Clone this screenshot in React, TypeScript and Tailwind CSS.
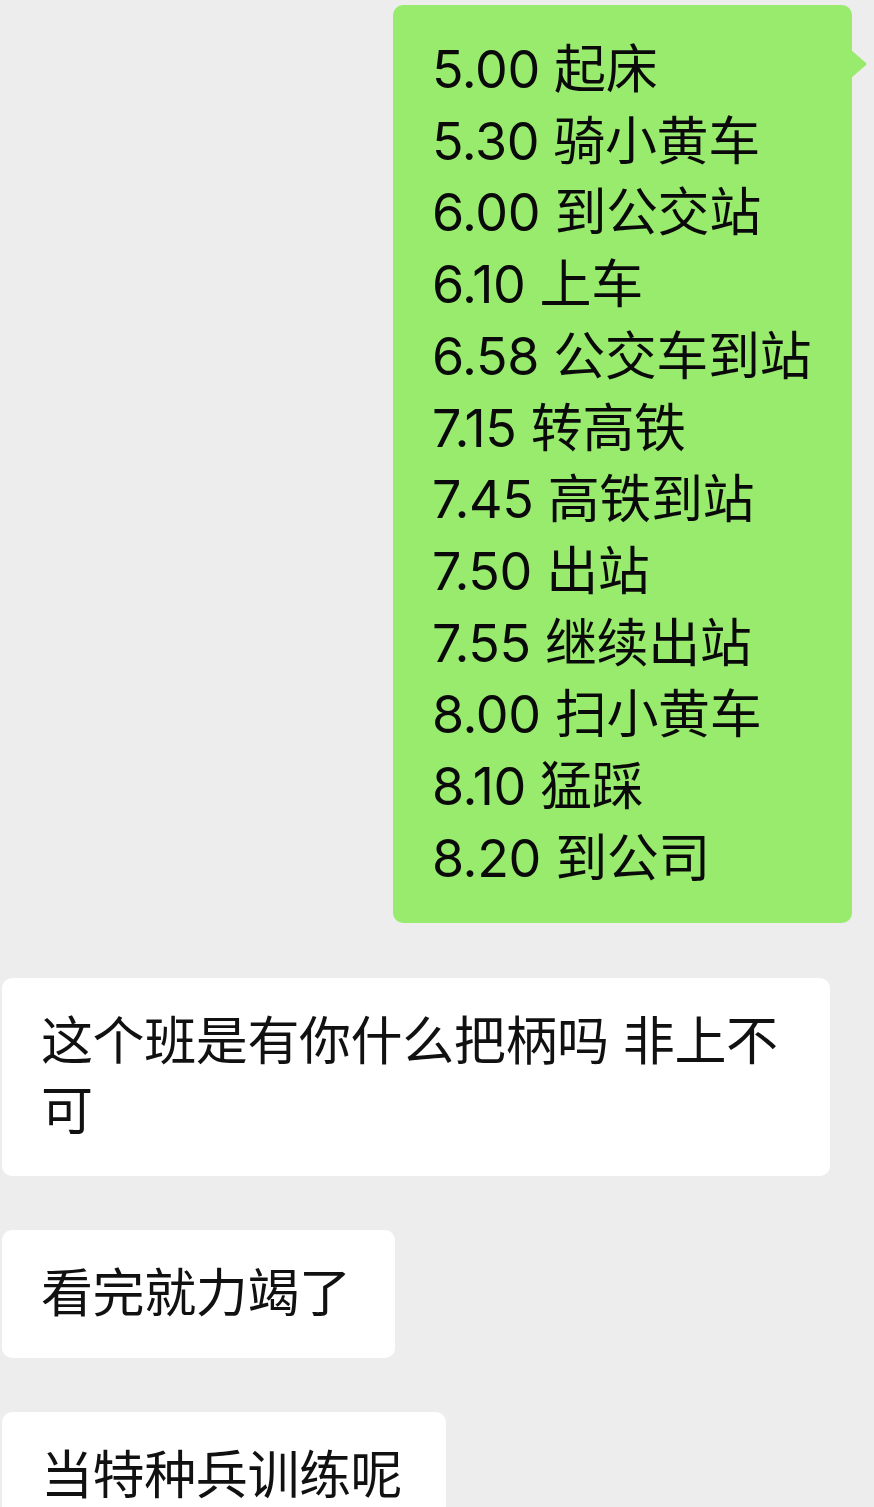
const schedule = [
  "5.00 起床",
  "5.30 骑小黄车",
  "6.00 到公交站",
  "6.10 上车",
  "6.58 公交车到站",
  "7.15 转高铁",
  "7.45 高铁到站",
  "7.50 出站",
  "7.55 继续出站",
  "8.00 扫小黄车",
  "8.10 猛踩",
  "8.20 到公司",
];

const font = "font-['Inter','Noto_Sans_CJK_SC',sans-serif]";

function LeftBubble({ children, className = "" }: { children: React.ReactNode; className?: string }) {
  return (
    <div
      className={`ml-[2px] rounded-[10px] bg-white py-[29px] pl-[39px] pr-[44px] text-[52px] leading-[70px] text-[#111] ${className}`}
    >
      {children}
    </div>
  );
}

export default function App() {
  return (
    <div className={`h-[1507px] w-full overflow-hidden bg-[#ededed] font-normal tracking-[-0.4px] ${font}`}>
      <div className="flex justify-end pt-[5px] pr-[22px]">
        <div className="relative w-[459px] rounded-[10px] bg-[#99eb6d] py-[29px] pl-[39px] text-[52px] leading-[71.7px] text-[#0a0a0a]">
          {schedule.map((line) => (
            <div key={line} className="whitespace-nowrap">
              {line}
            </div>
          ))}
          <svg
            className="absolute right-[-16px] top-[45px]"
            width="17"
            height="28"
            viewBox="0 0 17 28"
          >
            <path d="M0 0 L14 12 Q17 14 14 16 L0 28 Z" fill="#99eb6d" />
          </svg>
        </div>
      </div>

      <div className="mt-[55px] flex flex-col items-start gap-[54px]">
        <LeftBubble className="w-[828px]">
          这个班是有你什么把柄吗 非上不
          <br />可
        </LeftBubble>
        <LeftBubble>看完就力竭了</LeftBubble>
        <LeftBubble>当特种兵训练呢</LeftBubble>
      </div>
    </div>
  );
}
